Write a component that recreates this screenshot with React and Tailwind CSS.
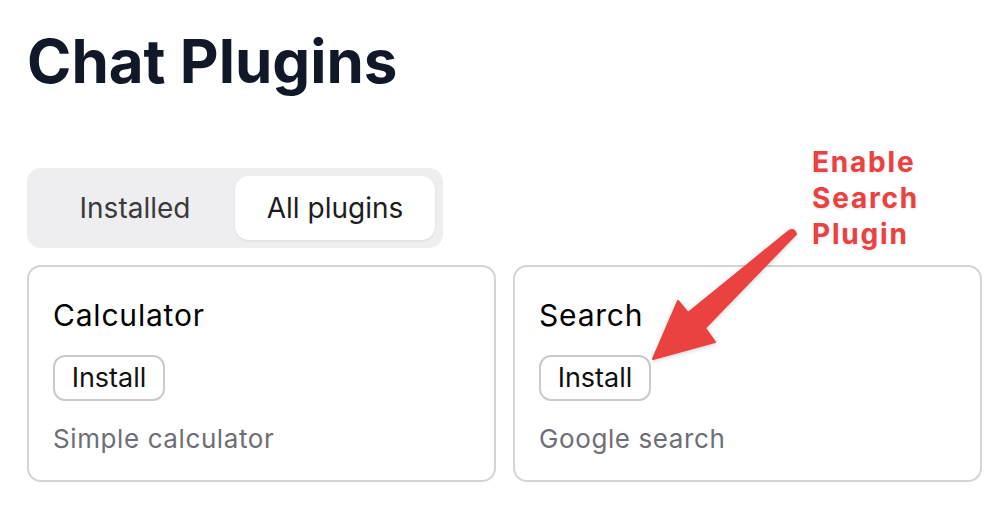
import React, { useState } from "react";

const plugins = [
  { name: "Calculator", desc: "Simple calculator" },
  { name: "Search", desc: "Google search" },
];

export default function App() {
  const [tab, setTab] = useState("all");

  return (
    <div
      className="relative min-h-[508px] bg-white pl-[27px] pr-[12px] pt-[31px]"
      style={{ fontFamily: "Inter, 'Noto Sans', sans-serif" }}
    >
      <h1 className="text-[60px] font-bold leading-none text-[#111827]">Chat Plugins</h1>

      <div className="mt-[77px] grid w-[416px] grid-cols-2 rounded-[14px] bg-[#eeeef0] p-[8px]">
        <button
          onClick={() => setTab("installed")}
          className={
            tab === "installed"
              ? "h-[64px] rounded-[14px] bg-white text-[28px] text-[#1c1c1e] shadow-[0_1px_3px_rgba(0,0,0,0.08)]"
              : "h-[64px] rounded-[14px] text-[28px] text-[#3a3a3c]"
          }
        >
          Installed
        </button>
        <button
          onClick={() => setTab("all")}
          className={
            tab === "all"
              ? "h-[64px] rounded-[14px] bg-white text-[28px] text-[#1c1c1e] shadow-[0_1px_3px_rgba(0,0,0,0.08)]"
              : "h-[64px] rounded-[14px] text-[28px] text-[#3a3a3c]"
          }
        >
          All plugins
        </button>
      </div>

      <div className="mt-[17px] grid w-[955px] grid-cols-2 gap-[17px]">
        {plugins.map((p) => (
          <div key={p.name} className="h-[217px] rounded-[14px] border-2 border-[#d4d4d8] px-[24px] pt-[27px]">
            <div className="text-[30px] leading-[42px] tracking-[0.8px] text-black">{p.name}</div>
            <button className="mt-[19px] flex h-[46px] w-[112px] items-center justify-center rounded-[12px] border-2 border-[#c9c9ce] text-[27px] text-[#111]">
              Install
            </button>
            <div className="mt-[20px] text-[26px] leading-[36px] tracking-[0.6px] text-[#6e6e76]">{p.desc}</div>
          </div>
        ))}
      </div>

      <div
        className="absolute left-[812px] top-[144px] text-[28px] font-bold leading-[36px] tracking-[1.8px] text-[#ea4141]"
        style={{ textShadow: "0 1px 3px rgba(0,0,0,0.12)" }}
      >
        Enable
        <br />
        Search
        <br />
        Plugin
      </div>

      <svg className="absolute left-0 top-0" width="994" height="508" style={{ filter: "drop-shadow(0 1px 2px rgba(0,0,0,0.2))" }}>
        <path
          d="M653 359 L678 301 L688 313 L789 231 Q794 228 796 234 L705 328 L715 342 Z"
          fill="#ea4141"
          stroke="#ea4141"
          strokeWidth="2"
          strokeLinejoin="round"
        />
      </svg>
    </div>
  );
}
